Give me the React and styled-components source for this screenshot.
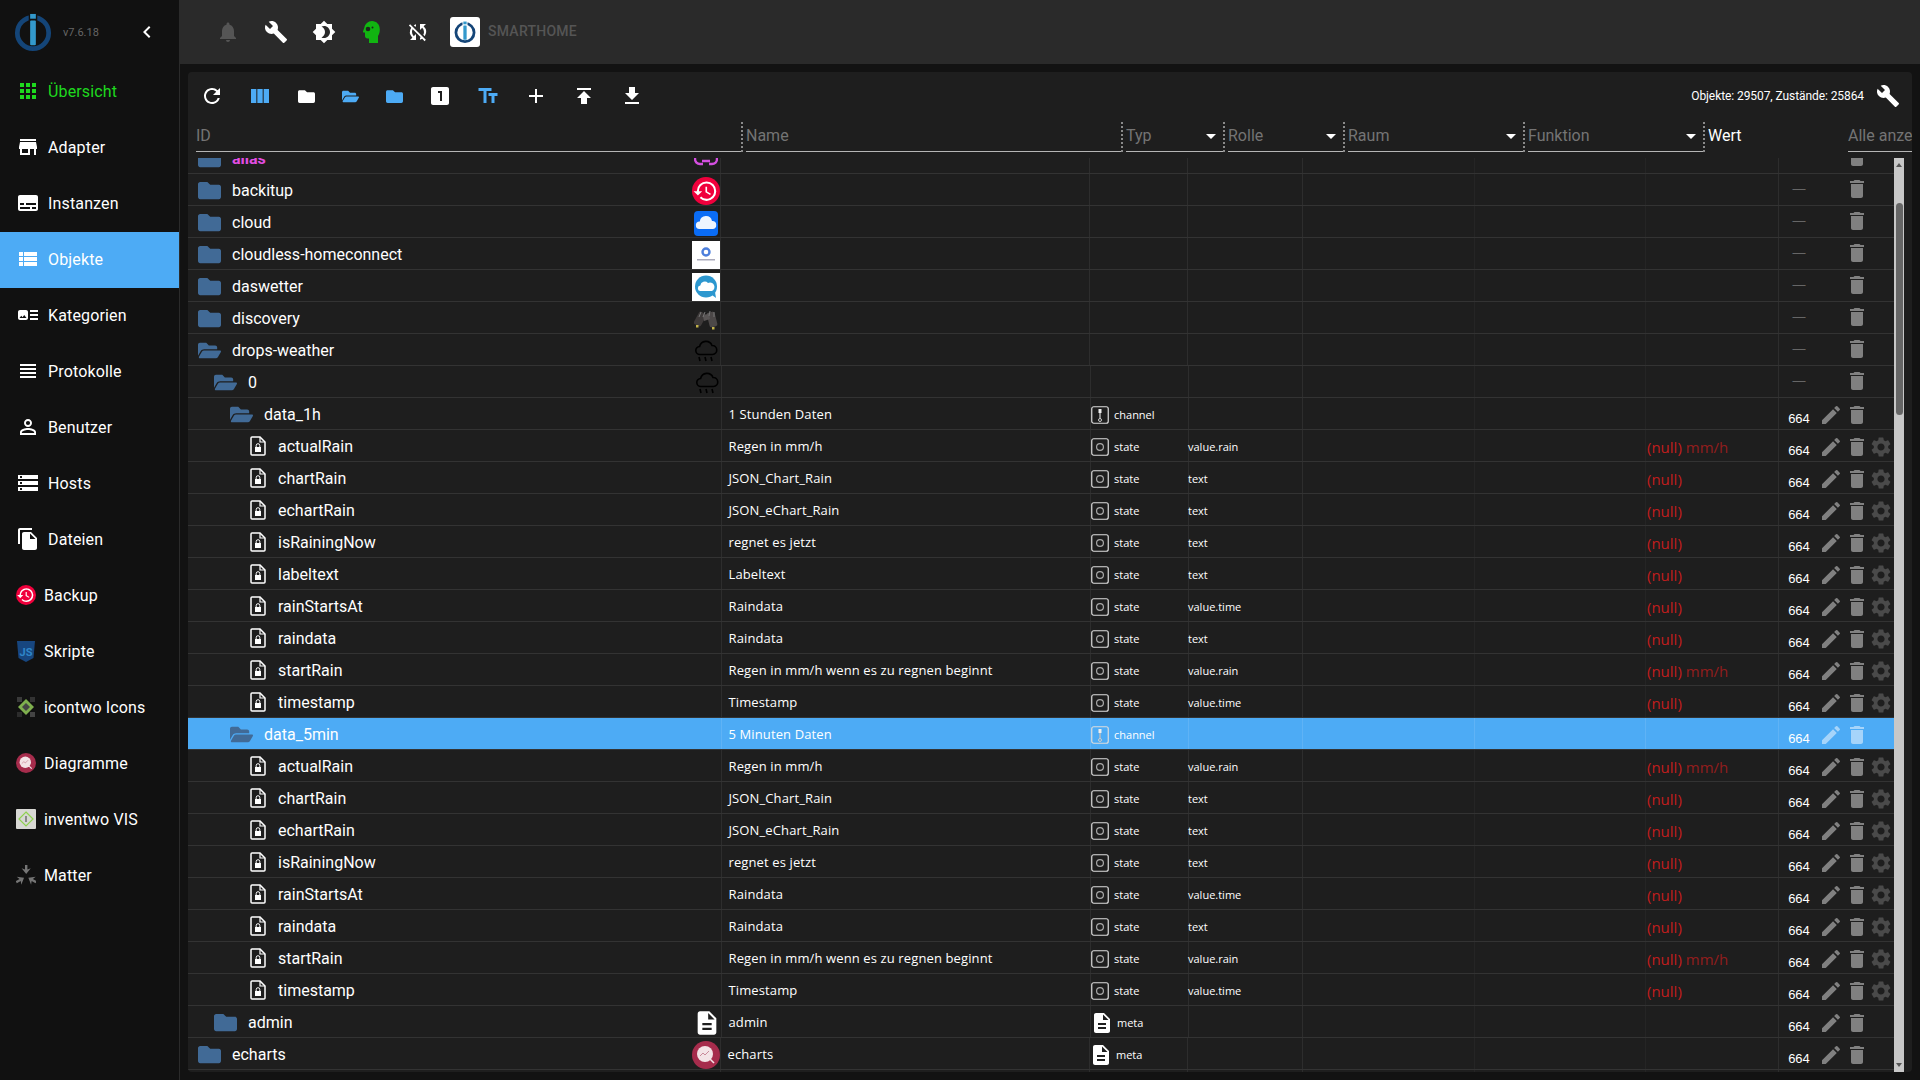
import React from 'react';
import styled, { createGlobalStyle } from 'styled-components';
import {
  MdAdd, MdApps, MdArrowDropDown, MdArtTrack, MdBrightness4, MdBuild, MdChevronLeft, MdDelete,
  MdDescription, MdEdit, MdFileCopy, MdGetApp, MdLooksOne, MdNotifications, MdPermIdentity,
  MdPublish, MdRefresh, MdSettings, MdStorage, MdStore, MdSubtitles, MdSyncDisabled, MdTextFields,
  MdViewColumn, MdViewHeadline, MdViewList
} from 'react-icons/md';
import { FaFolder, FaFolderOpen } from 'react-icons/fa';

const GlobalStyle = createGlobalStyle`
  html, body { margin: 0; height: 100%; background: #121212; }
  body { font-family: Roboto, "Liberation Sans", sans-serif; color: #fff; overflow: hidden; }
  * { box-sizing: border-box; }
`;

const Shell = styled.div`
  display: grid;
  grid-template-columns: 180px 1fr;
  height: 1080px;
  width: 1920px;
  overflow: hidden;
`;

/* sidebar */
const Sidebar = styled.aside`
  background: #111;
  border-right: 1px solid #2b2b2b;
  display: flex;
  flex-direction: column;
`;
const Brand = styled.div`
  height: 64px;
  display: flex;
  align-items: center;
  padding-left: 14px;
`;
const Version = styled.span`
  font-size: 11px;
  color: #666;
  margin-left: 11px;
  width: 72px;
`;
const NavItem = styled.div`
  height: 56px;
  display: flex;
  align-items: center;
  gap: 8px;
  padding: 0 0 2px 16px;
  font-size: 16px;
  letter-spacing: 0.15px;
  background: ${p => (p.$active ? '#4dabf5' : 'transparent')};
  color: ${p => p.$color || '#fff'};
  svg.material { font-size: 24px; flex: none; }
`;

/* top bar */
const Main = styled.main`
  display: flex;
  flex-direction: column;
  min-width: 0;
`;
const TopBar = styled.header`
  height: 64px;
  background: #2a2a2a;
  display: flex;
  align-items: center;
  padding-left: 24px;
`;
const TopButton = styled.div`
  width: ${p => (p.$narrow ? 44 : 48)}px;
  height: 48px;
  display: flex;
  align-items: center;
  justify-content: center;
  font-size: 24px;
  color: ${p => p.$color || '#fff'};
`;
const LogoTile = styled.div`
  width: 30px;
  height: 30px;
  background: #fff;
  border-radius: 3px;
  margin-left: 10px;
  display: flex;
  align-items: center;
  justify-content: center;
`;
const HostName = styled.span`
  margin: 0 0 2px 8px;
  font-size: 14px;
  font-weight: 500;
  letter-spacing: 0.25px;
  color: #555;
`;

/* objects panel */
const Panel = styled.section`
  margin: 8px;
  height: 1000px;
  background: #1e1e1e;
  border-radius: 4px;
  display: flex;
  flex-direction: column;
  overflow: hidden;
`;
const Toolbar = styled.div`
  height: 48px;
  flex: none;
  display: flex;
  align-items: center;
  padding-right: 12px;
`;
const ToolButton = styled.div`
  width: ${p => (p.$small ? '44px' : '48px')};
  height: 48px;
  display: flex;
  align-items: center;
  justify-content: center;
  font-size: ${p => (p.$small ? '17px' : '24px')};
  color: ${p => p.$color || '#fff'};
`;
const Stats = styled.span`
  margin-left: auto;
  margin-right: 12px;
  font-size: 12px;
  letter-spacing: -0.08px;
  color: #fff;
`;
const FilterBar = styled.div`
  flex: none;
  height: 33px;
  margin-bottom: 5px;
  padding-left: 8px;
  display: flex;
`;
const FilterField = styled.div`
  width: ${p => p.$w}px;
  flex: none;
  display: flex;
  align-items: center;
  justify-content: space-between;
  overflow: hidden;
  white-space: nowrap;
  font-size: 16px;
  color: ${p => (p.$plain ? '#fff' : '#747474')};
  border-bottom: ${p => (p.$plain ? '0' : '1px solid #b5b5b5')};
  padding-bottom: ${p => (p.$plain ? '1px' : '0')};
  height: 32px;
  svg { font-size: 24px; color: #fff; flex: none; }
`;
const FilterGap = styled.div`
  width: ${p => p.$w || 5}px;
  flex: none;
  height: 30px;
  margin-top: 2px;
  border-left: 2px dotted #8a8a8a;
`;
const TreeArea = styled.div`
  flex: 1;
  min-height: 0;
  display: flex;
`;
const TreeClip = styled.div`
  width: 1706px;
  flex: none;
  overflow: hidden;
`;
const Tree = styled.div`
  margin-top: -16px;
`;
const Row = styled.div`
  display: grid;
  grid-template-columns: ${p => 532 + p.$shift}px 369px 98px ${p => 115 - p.$shift}px 172px 171px 133px 116px;
  height: 32px;
  border-bottom: 1px solid #333;
  background: ${p => (p.$selected ? '#4dabf5' : 'transparent')};
`;
const IdCell = styled.div`
  display: flex;
  align-items: center;
  padding-left: ${p => 10 + p.$level * 16}px;
  min-width: 0;
`;
const ItemIcon = styled.div`
  width: ${p => (p.$file ? 32 : 34)}px;
  flex: none;
  display: flex;
  align-items: center;
  padding: 1px 0 0 ${p => (p.$file ? 4 : 0)}px;
  font-size: 23px;
  color: #416a96;
`;
const ItemId = styled.span`
  flex: 1;
  padding-top: 1px;
  font-size: 16px;
  white-space: nowrap;
  color: ${p => (p.$alias ? '#e14de1' : '#fff')};
  font-weight: ${p => (p.$alias ? 700 : 400)};
`;
const RowIcon = styled.div`
  width: 28px;
  height: 28px;
  flex: none;
  align-self: flex-end;
  display: flex;
  align-items: center;
  justify-content: center;
  font-size: 28px;
  color: #fff;
`;
const Cell = styled.div`
  border-left: 1px solid ${p => (p.$selected ? 'rgba(255,255,255,.1)' : p.$faint ? '#252525' : '#2d2d2d')};
  display: flex;
  align-items: center;
  min-width: 0;
  white-space: nowrap;
`;
const NameCell = styled(Cell)`
  padding-left: 6.500px;
  font: 13px "Open Sans", sans-serif;
  letter-spacing: 0.12px;
  color: #fff;
`;
const TypeCell = styled(Cell)`
  padding: 2px 0 0 0;
  gap: 5px;
  font: 11px "Open Sans", sans-serif;
  color: #fff;
  svg.meta { font-size: 24px; margin: 0 -2px 0 -1px; }
`;
const RoleCell = styled(Cell)`
  padding: 2px 0 0 0;
  font: 11px "Open Sans", sans-serif;
  color: #fff;
  span { margin-left: -1px; }
`;
const ValueCell = styled(Cell)`
  padding: 2px 0 0 1px;
  font: 15px "Open Sans", sans-serif;
  color: #c21d1d;
`;
const Unit = styled.span`
  margin-left: 4px;
  opacity: 0.7;
`;
const AclCell = styled(Cell)`
  display: grid;
  grid-template-columns: 40px 26px 24px 24px;
  align-items: center;
  font-size: 24px;
  color: ${p => (p.$selected ? '#a6d4fa' : '#808080')};
`;
const Mode = styled.span`
  font: 13px "Liberation Sans", sans-serif;
  padding: ${p => (p.$dash ? '0 9px 3px 9px' : '9px 9px 0 9px')};
  text-align: center;
  color: ${p => (p.$dash ? '#666' : '#fff')};
`;
const ActionSlot = styled.span`
  display: flex;
  padding: ${p => (p.$center ? '0 0 2px' : '3px 0 0')};
  color: ${p => p.$color || 'inherit'};
`;
const Track = styled.div`
  position: relative;
  width: 10px;
  flex: none;
  background: #c8c8c8;
  &::before, &::after {
    content: '';
    position: absolute;
    left: 2px;
    border: 3px solid transparent;
  }
  &::before { top: 2px; border-bottom: 4px solid #555; }
  &::after { bottom: 2px; border-top: 4px solid #555; }
`;
const Thumb = styled.div`
  width: 7px;
  height: 212px;
  margin: 45px 0 0 1.5px;
  border-radius: 4px;
  background: #666;
`;

function IoLogo({ size = 38 }) {
  return (
    <svg width={size} height={size} viewBox="0 0 40 40">
      <circle cx="20" cy="21" r="16.5" fill="none" stroke="#144578" strokeWidth="5" />
      <rect x="15.5" y="0" width="9" height="10" fill={size < 30 ? '#fff' : '#111'} />
      <rect x="17" y="1" width="6" height="5" fill="#3399cc" />
      <rect x="17" y="8" width="6" height="26" rx="1" fill="#3399cc" />
    </svg>
  );
}

function BackupIcon({ size = 20 }) {
  return (
    <svg width={size} height={size} viewBox="0 0 28 28">
      <circle cx="14" cy="14" r="14" fill="#f0003c" />
      <g transform="translate(0.5 1.2) scale(1.08)">
        <path fill="#fff" d="M13 3a9 9 0 0 0-9 9H1l3.89 3.89.07.14L9 12H6c0-3.87 3.13-7 7-7s7 3.13 7 7-3.13 7-7 7c-1.93 0-3.68-.79-4.94-2.06l-1.42 1.42A8.954 8.954 0 0 0 13 21a9 9 0 0 0 0-18zm-1 5v5l4.28 2.54.72-1.21-3.5-2.08V8H12z" />
      </g>
    </svg>
  );
}

function EchartsIcon({ size = 20 }) {
  return (
    <svg width={size} height={size} viewBox="0 0 28 28">
      <circle cx="14" cy="14" r="14" fill="#a62c4c" />
      <circle cx="13" cy="13" r="8" fill="#f3e3e6" />
      <path d="M18 18l4 4" stroke="#f3e3e6" strokeWidth="1.6" />
      <path d="M8 15l3-3 2 2 4-4" stroke="#c98a9a" strokeWidth="1" fill="none" />
    </svg>
  );
}

function JsIcon() {
  return (
    <svg width="20" height="21" viewBox="0 0 20 21">
      <path d="M1 0h18l-1.500 17L10 21l-7.500-4z" fill="#17467f" />
      <text x="10" y="14.500" textAnchor="middle" fontFamily="Roboto" fontWeight="700" fontSize="11" fill="#2f86c9">JS</text>
    </svg>
  );
}

function IcontwoIcon() {
  return (
    <svg width="20" height="22" viewBox="0 0 20 22">
      <rect x="1" y="1" width="5" height="5" fill="#3a3a3a" />
      <rect x="14" y="1" width="5" height="5" fill="#333" />
      <rect x="1" y="16" width="5" height="5" fill="#2c2c2c" />
      <rect x="14" y="16" width="5" height="5" fill="#444" />
      <path d="M10 3l8 8-8 8-8-8z" fill="#7faf4e" />
      <path d="M10 7l4 4-4 4-4-4z" fill="#444" />
    </svg>
  );
}

function InventwoIcon() {
  return (
    <svg width="20" height="20" viewBox="0 0 20 20">
      <rect width="20" height="20" rx="1" fill="#d8d8d4" />
      <path d="M10 3l7 7-7 7-7-7z" fill="none" stroke="#8fd14f" strokeWidth="1.2" />
      <path d="M10 7v6" stroke="#555" strokeWidth="1.2" />
    </svg>
  );
}

const matterArrow = 'M9 0h2.400v4.500l3.400-1.300L10.200 9 5.600 3.200 9 4.500z';

function MatterIcon() {
  return (
    <svg width="20" height="20" viewBox="0 0 20 20" fill="#757575">
      <path d={matterArrow} />
      <path d={matterArrow} transform="rotate(120 10.200 11.500)" />
      <path d={matterArrow} transform="rotate(240 10.200 11.500)" />
    </svg>
  );
}

function ExpertIcon() {
  return (
    <svg width="24" height="24" viewBox="0 0 24 24" style={{ marginRight: 2 }}>
      <path fill="#11b511" d="M13 1C9 1 6 4 5.400 7.500L4 11.500c-.2.6.1 1 .7 1H6v3.500C6 17.500 7 18.500 8.500 18.500H10V23h9v-7c1.300-1.700 1.800-4 1.800-6.500C20.800 4.500 17.500 1 13 1z" />
      <circle cx="9" cy="9" r="2.300" fill="#1a2a1a" />
      <circle cx="13.500" cy="7.500" r="1" fill="#1a2a1a" />
    </svg>
  );
}

function CloudIcon() {
  return (
    <svg width="24" height="25" viewBox="0 0 24 25">
      <rect width="24" height="25" rx="4" fill="#0a6cf5" />
      <path d="M5.500 18a3.800 3.800 0 0 1 .3-7.600A6.200 6.200 0 0 1 18 10a4 4 0 0 1 .5 8z" fill="#eef5ff" />
    </svg>
  );
}

function CloudlessIcon() {
  return (
    <svg width="28" height="28" viewBox="0 0 28 28">
      <rect width="28" height="28" fill="#fff" />
      <circle cx="14" cy="11" r="3.500" fill="none" stroke="#4d7fdc" strokeWidth="2.400" />
      <rect x="5" y="18" width="18" height="1.500" fill="#aab" />
    </svg>
  );
}

function WeatherIcon() {
  return (
    <svg width="28" height="28" viewBox="0 0 28 28">
      <rect width="28" height="28" fill="#fff" />
      <circle cx="14" cy="13.500" r="11" fill="#2c97cf" />
      <path d="M20 22l4 3-1-6z" fill="#2c97cf" />
      <path d="M8 18a2.800 2.800 0 0 1 .3-5.500A4.500 4.500 0 0 1 16 10a3.600 3.600 0 0 1 4 8z" fill="#fff" />
    </svg>
  );
}

function BinocularsIcon() {
  return (
    <svg width="24" height="24" viewBox="0 0 24 24">
      <rect x="2" y="5" width="8" height="14" rx="2" fill="#3e3a3a" transform="rotate(28 6 12)" />
      <rect x="14" y="5" width="8" height="15" rx="2" fill="#4c4848" transform="rotate(-14 18 12)" />
      <path d="M9 9l6-3 1 6-6 2z" fill="#5a5656" />
      <path d="M7 5l-2 5M11 5l-2 5M16 4l-1 5M20 5l0 5" stroke="#777" strokeWidth="1" />
      <rect x="2" y="18" width="2.500" height="2.500" fill="#c2b24a" />
      <rect x="18" y="20" width="2.500" height="2.500" fill="#c2b24a" />
    </svg>
  );
}

function RainIcon() {
  return (
    <svg width="24" height="24" viewBox="0 0 24 24" fill="none" stroke="#000" strokeWidth="1.600">
      <path d="M6 15.500a4 4 0 0 1-.4-8A6.500 6.500 0 0 1 18 6.500a4.500 4.500 0 0 1 .5 9z" />
      <path d="M5 18l1 4M11 18l1 4M17 18l1 4" />
    </svg>
  );
}

function AliasIcon() {
  return (
    <svg width="24" height="24" viewBox="0 0 24 24" fill="none" stroke="#d44fe0" strokeWidth="2.400">
      <path d="M9 17H6a5 5 0 0 1 0-10h3M15 7h3a5 5 0 0 1 0 10h-3M8 14h8" />
    </svg>
  );
}

function FileLockIcon() {
  return (
    <svg width="16" height="20" viewBox="0 0 16 20" fill="none">
      <path d="M1 2a1 1 0 0 1 1-1h8l5 5v12a1 1 0 0 1-1 1H2a1 1 0 0 1-1-1z" stroke="#fff" strokeWidth="1.500" />
      <path d="M10 1v5h5" stroke="#fff" strokeWidth="1.200" />
      <rect x="5" y="11" width="6" height="5" fill="#fff" />
      <path d="M6.200 11V9.500a1.800 1.800 0 0 1 3.600 0V11" stroke="#fff" strokeWidth="1" />
    </svg>
  );
}

function TypeIcon({ kind }) {
  return (
    <svg width="18" height="18" viewBox="0 0 18 18" fill="none">
      <rect x="0.750" y="0.750" width="16.500" height="16.500" rx="2" stroke="#ddd" strokeWidth="1.200" />
      {kind === 'state'
        ? <circle cx="9" cy="9" r="3.400" stroke="#aaa" strokeWidth="1.200" />
        : (
          <>
            <rect x="7.500" y="3" width="3" height="4" fill="#eee" />
            <path d="M9 7v6" stroke="#bbb" strokeWidth="1.400" />
            <circle cx="9" cy="14" r="1.500" stroke="#ccc" />
          </>
        )}
    </svg>
  );
}

const navItems = [
  { label: 'Übersicht', icon: <MdApps className="material" />, color: '#1ed91e' },
  { label: 'Adapter', icon: <MdStore className="material" /> },
  { label: 'Instanzen', icon: <MdSubtitles className="material" /> },
  { label: 'Objekte', icon: <MdViewList className="material" />, active: true },
  { label: 'Kategorien', icon: <MdArtTrack className="material" /> },
  { label: 'Protokolle', icon: <MdViewHeadline className="material" /> },
  { label: 'Benutzer', icon: <MdPermIdentity className="material" /> },
  { label: 'Hosts', icon: <MdStorage className="material" /> },
  { label: 'Dateien', icon: <MdFileCopy className="material" /> },
  { label: 'Backup', icon: <BackupIcon /> },
  { label: 'Skripte', icon: <JsIcon /> },
  { label: 'icontwo Icons', icon: <IcontwoIcon /> },
  { label: 'Diagramme', icon: <EchartsIcon /> },
  { label: 'inventwo VIS', icon: <InventwoIcon /> },
  { label: 'Matter', icon: <MatterIcon /> }
];

const stateRow = (id, name, role, unit) => ({ id, name, role, unit, level: 3, kind: 'file', type: 'state', acl: true, null: true });

const rows = [
  { id: 'alias', level: 0, kind: 'folder', icon: <AliasIcon />, alias: true },
  { id: 'backitup', level: 0, kind: 'folder', icon: <BackupIcon size={28} /> },
  { id: 'cloud', level: 0, kind: 'folder', icon: <CloudIcon /> },
  { id: 'cloudless-homeconnect', level: 0, kind: 'folder', icon: <CloudlessIcon /> },
  { id: 'daswetter', level: 0, kind: 'folder', icon: <WeatherIcon /> },
  { id: 'discovery', level: 0, kind: 'folder', icon: <BinocularsIcon /> },
  { id: 'drops-weather', level: 0, kind: 'open', icon: <RainIcon /> },
  { id: '0', level: 1, kind: 'open', icon: <RainIcon /> },
  { id: 'data_1h', level: 2, kind: 'open', name: '1 Stunden Daten', type: 'channel', acl: true },
  stateRow('actualRain', 'Regen in mm/h', 'value.rain', 'mm/h'),
  stateRow('chartRain', 'JSON_Chart_Rain', 'text'),
  stateRow('echartRain', 'JSON_eChart_Rain', 'text'),
  stateRow('isRainingNow', 'regnet es jetzt', 'text'),
  stateRow('labeltext', 'Labeltext', 'text'),
  stateRow('rainStartsAt', 'Raindata', 'value.time'),
  stateRow('raindata', 'Raindata', 'text'),
  stateRow('startRain', 'Regen in mm/h wenn es zu regnen beginnt', 'value.rain', 'mm/h'),
  stateRow('timestamp', 'Timestamp', 'value.time'),
  { id: 'data_5min', level: 2, kind: 'open', name: '5 Minuten Daten', type: 'channel', acl: true, selected: true },
  stateRow('actualRain', 'Regen in mm/h', 'value.rain', 'mm/h'),
  stateRow('chartRain', 'JSON_Chart_Rain', 'text'),
  stateRow('echartRain', 'JSON_eChart_Rain', 'text'),
  stateRow('isRainingNow', 'regnet es jetzt', 'text'),
  stateRow('rainStartsAt', 'Raindata', 'value.time'),
  stateRow('raindata', 'Raindata', 'text'),
  stateRow('startRain', 'Regen in mm/h wenn es zu regnen beginnt', 'value.rain', 'mm/h'),
  stateRow('timestamp', 'Timestamp', 'value.time'),
  { id: 'admin', level: 1, kind: 'folder', icon: <MdDescription />, name: 'admin', type: 'meta', acl: true },
  { id: 'echarts', level: 0, kind: 'folder', icon: <EchartsIcon size={28} />, name: 'echarts', type: 'meta', acl: true },
  { id: '', level: 0, kind: 'blank' }
];

function ObjectRow({ row }) {
  const sel = row.selected;
  return (
    <Row $selected={sel} $shift={row.level > 0 ? 1 : 0}>
      <IdCell $level={row.level}>
        <ItemIcon $file={row.kind === 'file'}>
          {row.kind === 'folder' && <FaFolder />}
          {row.kind === 'open' && <FaFolderOpen />}
          {row.kind === 'file' && <FileLockIcon />}
        </ItemIcon>
        <ItemId $alias={row.alias}>{row.id}</ItemId>
        {row.icon && <RowIcon>{row.icon}</RowIcon>}
      </IdCell>
      <NameCell $selected={sel}>{row.name}</NameCell>
      <TypeCell $selected={sel}>
        {row.type === 'meta' && <MdDescription className="meta" />}
        {row.type && row.type !== 'meta' && <TypeIcon kind={row.type} />}
        {row.type}
      </TypeCell>
      <RoleCell $selected={sel}><span>{row.role}</span></RoleCell>
      <Cell $selected={sel} />
      <Cell $selected={sel} $faint />
      <ValueCell $selected={sel} $faint>
        {row.null && <>(null){row.unit && <Unit>{row.unit}</Unit>}</>}
      </ValueCell>
      <AclCell $selected={sel}>
        {row.kind !== 'blank' && (
          <>
            {row.acl ? <Mode>664</Mode> : <Mode $dash>—</Mode>}
            <ActionSlot>{row.acl && <MdEdit />}</ActionSlot>
            <ActionSlot $center={!row.acl}><MdDelete /></ActionSlot>
            {row.type === 'state' && <ActionSlot $color="#4a4a4a"><MdSettings /></ActionSlot>}
          </>
        )}
      </AclCell>
    </Row>
  );
}

export default function App() {
  return (
    <Shell>
      <GlobalStyle />
      <Sidebar>
        <Brand>
          <IoLogo />
          <Version>v7.6.18</Version>
          <MdChevronLeft size={24} color="#fff" />
        </Brand>
        {navItems.map(item => (
          <NavItem key={item.label} $active={item.active} $color={item.color}>
            {item.icon}
            {item.label}
          </NavItem>
        ))}
      </Sidebar>
      <Main>
        <TopBar>
          <TopButton $color="#555"><MdNotifications /></TopButton>
          <TopButton><MdBuild /></TopButton>
          <TopButton><MdBrightness4 /></TopButton>
          <TopButton><ExpertIcon /></TopButton>
          <TopButton $narrow><MdSyncDisabled /></TopButton>
          <LogoTile><IoLogo size={22} /></LogoTile>
          <HostName>SMARTHOME</HostName>
        </TopBar>
        <Panel>
          <Toolbar>
            <ToolButton><MdRefresh /></ToolButton>
            <ToolButton $color="#4dabf5"><MdViewColumn /></ToolButton>
            <ToolButton $small><FaFolder /></ToolButton>
            <ToolButton $small $color="#4dabf5"><FaFolderOpen /></ToolButton>
            <ToolButton $small $color="#4dabf5"><FaFolder /></ToolButton>
            <ToolButton><MdLooksOne /></ToolButton>
            <ToolButton $color="#4dabf5"><MdTextFields /></ToolButton>
            <ToolButton><MdAdd /></ToolButton>
            <ToolButton><MdPublish /></ToolButton>
            <ToolButton><MdGetApp /></ToolButton>
            <Stats>Objekte: 29507, Zustände: 25864</Stats>
            <MdBuild size={24} color="#fff" />
          </Toolbar>
          <FilterBar>
            <FilterField $w={545}>ID</FilterField>
            <FilterGap />
            <FilterField $w={375}>Name</FilterField>
            <FilterGap />
            <FilterField $w={97}>Typ<MdArrowDropDown /></FilterField>
            <FilterGap />
            <FilterField $w={115}>Rolle<MdArrowDropDown /></FilterField>
            <FilterGap />
            <FilterField $w={175}>Raum<MdArrowDropDown /></FilterField>
            <FilterGap />
            <FilterField $w={175}>Funktion<MdArrowDropDown /></FilterField>
            <FilterGap />
            <FilterField $w={140} $plain>Wert</FilterField>
            <FilterField $w={64}>Alle anzeigen</FilterField>
          </FilterBar>
          <TreeArea>
            <TreeClip>
              <Tree>
                {rows.map((row, i) => <ObjectRow key={i} row={row} />)}
              </Tree>
            </TreeClip>
            <Track><Thumb /></Track>
          </TreeArea>
        </Panel>
      </Main>
    </Shell>
  );
}
